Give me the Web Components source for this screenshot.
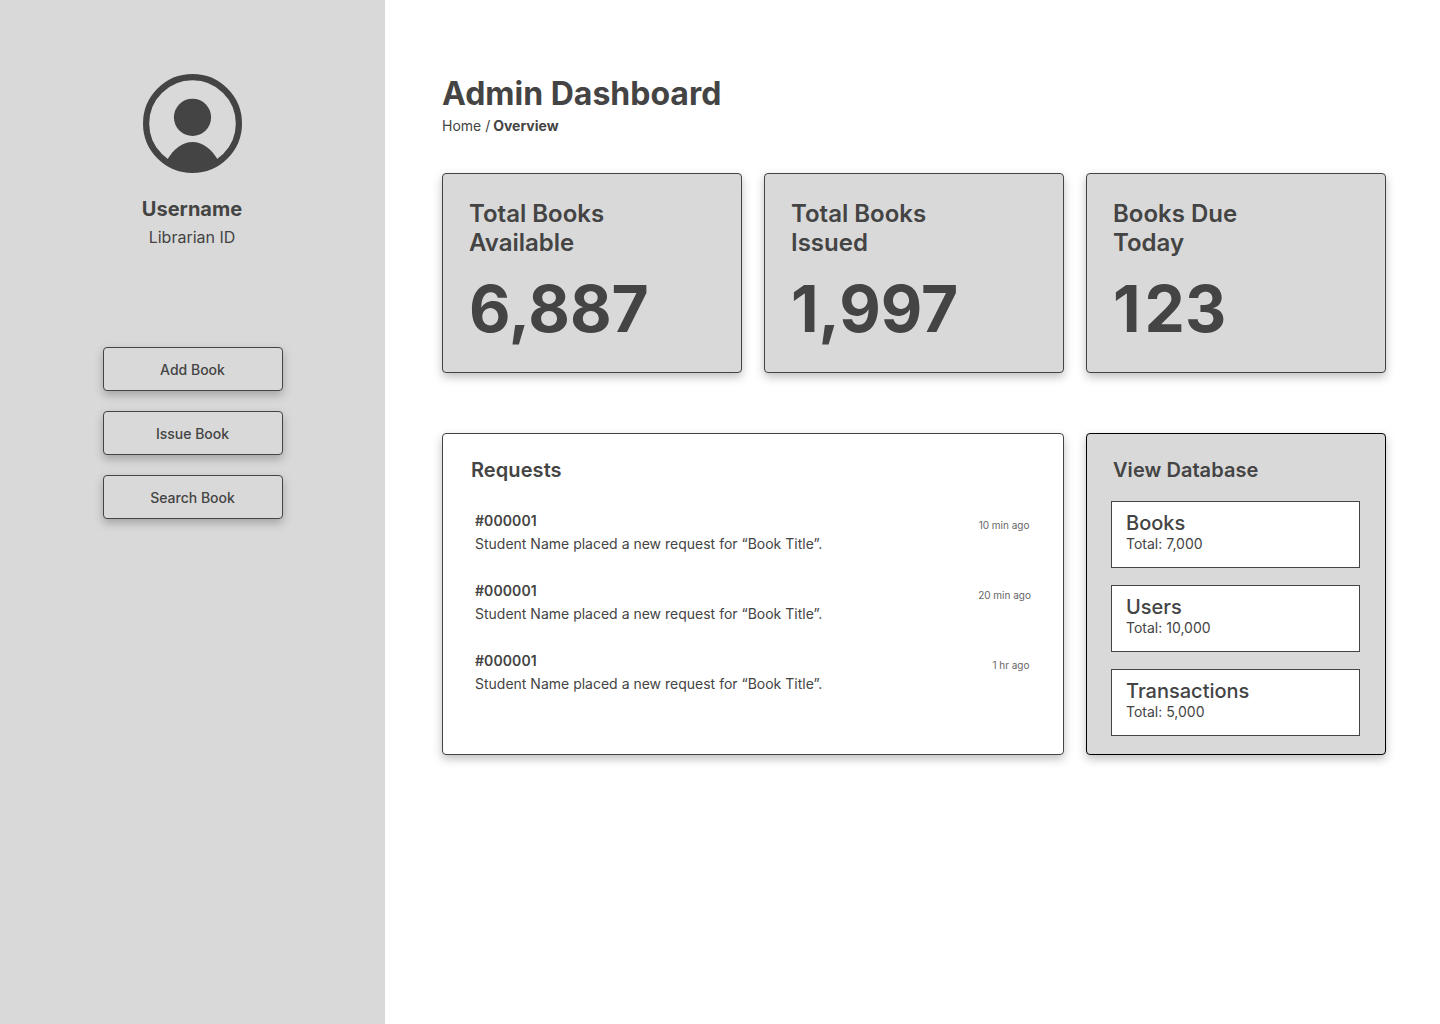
<!DOCTYPE html>
<html lang="en">
<head>
<meta charset="utf-8">
<title>Admin Dashboard</title>
<style>
html,body{margin:0;height:100%;background:#fff}
body{font-family:Inter,"Liberation Sans",sans-serif;color:#444;overflow:hidden;--shadow:0 4px 10px rgba(0,0,0,.25)}
</style>
</head>
<body>
<admin-app></admin-app>
<script>
function define(name, render) {
  customElements.define(name, class extends HTMLElement {
    constructor() {
      super();
      this.attachShadow({ mode: 'open' }).innerHTML =
        '<style>*{box-sizing:border-box}:host{box-sizing:border-box}</style>' + render(this);
    }
  });
}

define('user-profile', () => `
<style>
:host{display:flex;flex-direction:column;align-items:center}
svg{display:block;width:99px;height:99px}
.name{font-weight:700;font-size:20px;line-height:24px;margin-top:24px;margin-right:1px}
.id{font-size:16px;line-height:20px;margin-top:6px;margin-right:1px}
</style>
<svg viewBox="0 0 99 99">
  <circle cx="49.5" cy="43.3" r="18.6" fill="#444"/>
  <path d="M24 86C31 74.500 39.500 68 49.500 68S68 74.500 75 86C68 92.500 59 96 49.500 96S31 92.500 24 86Z" fill="#444"/>
  <circle cx="49.5" cy="49.5" r="46.4" fill="none" stroke="#444" stroke-width="6.2"/>
</svg>
<div class="name"><slot name="name"></slot></div>
<div class="id"><slot name="id"></slot></div>`);

define('side-button', () => `
<style>
:host{display:block}
button{display:block;width:180px;height:44px;padding:1px 0 0;border:1px solid #444;border-radius:4px;background:#d9d9d9;
 font:500 14px/20px Inter,"Liberation Sans",sans-serif;color:#444;box-shadow:var(--shadow)}
</style>
<button><slot></slot></button>`);

define('side-bar', () => `
<style>
:host{display:flex;flex-direction:column;align-items:center;width:385px;flex:none;background:#d9d9d9;padding-top:74px}
nav{display:flex;flex-direction:column;gap:20px;margin-top:100px}
</style>
<user-profile><span slot="name">Username</span><span slot="id">Librarian ID</span></user-profile>
<nav><side-button>Add Book</side-button><side-button>Issue Book</side-button><side-button>Search Book</side-button></nav>`);

define('page-header', () => `
<style>
:host{display:block}
h1{margin:0;font-size:32px;line-height:40px;font-weight:700}
p{margin:2px 0 0;font-size:14px;line-height:20px}
b{font-weight:700;margin-left:-1px}
</style>
<h1>Admin Dashboard</h1><p>Home / <b>Overview</b></p>`);

define('stat-card', () => `
<style>
:host{display:block;width:300px;height:200px;padding:25px 26px;border:1px solid #444;border-radius:4px;background:#d9d9d9;box-shadow:var(--shadow)}
.label{width:170px;font-size:24px;line-height:29px;font-weight:600}
.value{margin-top:13px;font-size:64px;line-height:77px;font-weight:700}
</style>
<div class="label"><slot name="label"></slot></div>
<div class="value"><slot name="value"></slot></div>`);

define('request-item', () => `
<style>
:host{display:flex;justify-content:space-between;height:70px}
.id{font-size:14px;line-height:20px;font-weight:600;letter-spacing:.1px}
.text{font-size:14px;line-height:20px;margin-top:3px}
.time{font-size:10px;line-height:12px;margin-top:8px;color:#666}
:host([short]) .time{margin-right:1.5px}
</style>
<div><div class="id"><slot name="id"></slot></div><div class="text"><slot></slot></div></div>
<div class="time"><slot name="time"></slot></div>`);

define('requests-panel', () => `
<style>
:host{display:block;width:622px;height:322px;padding:24px 32px 0;border:1px solid #444;border-radius:4px;background:#fff;box-shadow:var(--shadow)}
h2{margin:0 0 29px -4px;font-size:20px;line-height:24px;font-weight:600;letter-spacing:.08px}
</style>
<h2>Requests</h2>
<request-item short><span slot="id">#000001</span>Student Name placed a new request for “Book Title”.<span slot="time">10 min ago</span></request-item>
<request-item><span slot="id">#000001</span>Student Name placed a new request for “Book Title”.<span slot="time">20 min ago</span></request-item>
<request-item short><span slot="id">#000001</span>Student Name placed a new request for “Book Title”.<span slot="time">1 hr ago</span></request-item>`);

define('database-entry', () => `
<style>
:host{display:block;width:249px;height:67px;border:1px solid #444;background:#fff;padding:9px 14px}
.name{font-size:20px;line-height:24px;font-weight:500}
.total{font-size:14px;line-height:17px}
</style>
<div class="name"><slot name="name"></slot></div><div class="total"><slot></slot></div>`);

define('database-panel', () => `
<style>
:host{display:block;width:300px;height:322px;padding:24px 24px 0;border:1px solid #000;border-radius:4px;background:#d9d9d9;box-shadow:var(--shadow)}
h2{margin:0 0 19px 2px;font-size:20px;line-height:24px;font-weight:600;letter-spacing:.05px}
.list{display:flex;flex-direction:column;gap:17px}
</style>
<h2>View Database</h2>
<div class="list">
<database-entry><span slot="name">Books</span>Total: 7,000</database-entry>
<database-entry><span slot="name">Users</span>Total: 10,000</database-entry>
<database-entry><span slot="name">Transactions</span>Total: 5,000</database-entry>
</div>`);

define('admin-app', () => `
<style>
:host{display:flex;height:100vh;min-height:1024px}
main{padding:74px 0 0 57px}
.row{display:flex;gap:22px}
.stats{margin-top:37px}
.panels{margin-top:60px}
.loose{letter-spacing:4px}
</style>
<side-bar></side-bar>
<main>
<page-header></page-header>
<div class="row stats">
<stat-card><span slot="label">Total Books Available</span><span slot="value">6,887</span></stat-card>
<stat-card><span slot="label">Total Books Issued</span><span slot="value">1,997</span></stat-card>
<stat-card><span slot="label">Books Due Today</span><span slot="value"><span class="loose">1</span>23</span></stat-card>
</div>
<div class="row panels"><requests-panel></requests-panel><database-panel></database-panel></div>
</main>`);
</script>
</body>
</html>
